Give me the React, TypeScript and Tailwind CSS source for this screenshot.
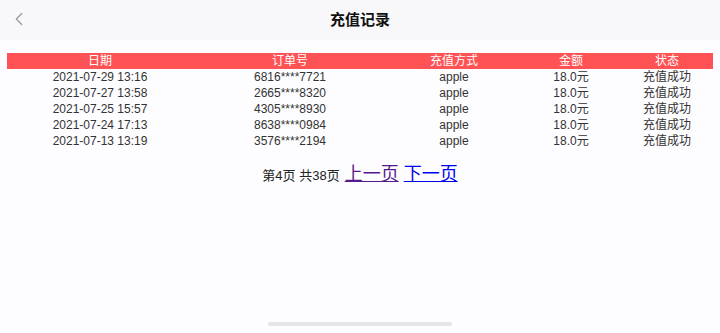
import { ChevronLeft } from 'lucide-react'

const rows = [
  { date: '2021-07-29 13:16', order: '6816****7721' },
  { date: '2021-07-27 13:58', order: '2665****8320' },
  { date: '2021-07-25 15:57', order: '4305****8930' },
  { date: '2021-07-24 17:13', order: '8638****0984' },
  { date: '2021-07-13 13:19', order: '3576****2194' },
]

const cols = 'grid grid-cols-[186px_194px_134px_100px_92px] text-center'

export default function App() {
  return (
    <div
      className="relative w-[720px] h-[333px] bg-[#fdfdff] overflow-hidden"
      style={{ fontFamily: '"Liberation Sans", "Noto Sans CJK SC", sans-serif' }}
    >
      {/* 顶部导航 */}
      <header className="relative h-[40px] bg-[#f8f8fa] flex items-center justify-center">
        <ChevronLeft className="absolute left-[8px] top-[8px] w-[22px] h-[22px] text-[#999]" strokeWidth={1.3} />
        <h1 className="text-[15px] font-bold text-[#111]">充值记录</h1>
      </header>

      {/* 记录表格 */}
      <div className="mt-[13px] mx-[7px] w-[706px] text-[12px] leading-[16px]">
        <div className={`${cols} bg-[#ff5254] text-white`}>
          <div>日期</div>
          <div>订单号</div>
          <div>充值方式</div>
          <div>金额</div>
          <div>状态</div>
        </div>
        {rows.map((r) => (
          <div key={r.order} className={`${cols} text-[#333]`}>
            <div>{r.date}</div>
            <div>{r.order}</div>
            <div>apple</div>
            <div>18.0元</div>
            <div>充值成功</div>
          </div>
        ))}
      </div>

      {/* 分页 */}
      <div className="mt-[12px] flex items-baseline justify-center gap-[5px] text-[#222]">
        <span className="text-[13px]">第4页 共38页</span>
        <a href="#" className="text-[18px] text-[#551a8b] underline">上一页</a>
        <a href="#" className="text-[18px] text-[#0000ee] underline">下一页</a>
      </div>

      <div className="absolute left-[268px] bottom-[7px] w-[184px] h-[4px] rounded-full bg-[#e6e6ea]" />
    </div>
  )
}
